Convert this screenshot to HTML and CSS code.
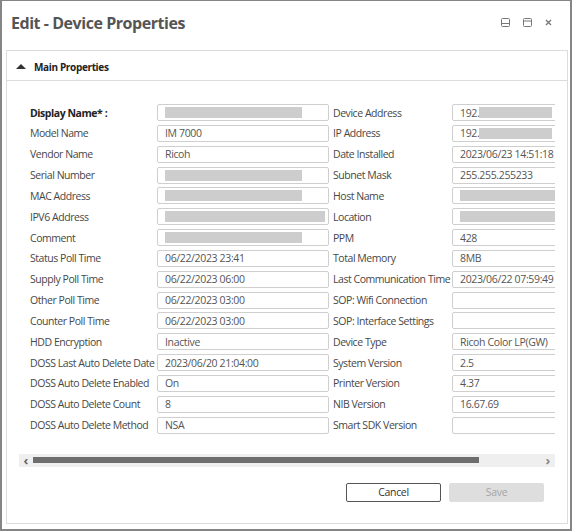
FILE: index.html
```html
<!DOCTYPE html>
<html lang="en">
<head>
    <meta charset="UTF-8">
    <title>Edit - Device Properties</title>
    <link rel="stylesheet" href="styles.css">
</head>
<body>
<div class="window">
    <!-- title bar -->
    <div class="titleBar">
        <div class="titleText">Edit - Device Properties</div>
        <div class="winIcons">
            <svg width="9" height="9" viewBox="0 0 9 9"><rect x="0.5" y="0.5" width="8" height="8" rx="1" fill="none" stroke="#777"/><line x1="1" y1="5.5" x2="8" y2="5.5" stroke="#777"/></svg>
            <svg width="9" height="9" viewBox="0 0 9 9"><rect x="0.5" y="0.5" width="8" height="8" rx="1" fill="none" stroke="#777"/><line x1="1" y1="3" x2="8" y2="3" stroke="#777"/></svg>
            <svg width="7" height="7" viewBox="0 0 7 7"><path d="M1 1 L6 6 M6 1 L1 6" stroke="#777" stroke-width="1.4"/></svg>
        </div>
    </div>

    <div class="panel">
        <div class="panelHead">
            <span class="arrowUp"></span>
            <span class="panelTitle">Main Properties</span>
        </div>

        <div class="scrollView">
            <div class="propGrid" id="propGrid"></div>
        </div>
        <div class="hScroll">
            <span class="sArrow left">&#8249;</span>
            <div class="sThumb"></div>
            <span class="sArrow right">&#8250;</span>
        </div>

        <div class="btnRow">
            <button class="btn cancel">Cancel</button>
            <button class="btn save" disabled>Save</button>
        </div>
    </div>
</div>

<script>
    // [label, value, redacted width, required]
    const rows = [
        [["Display Name* :", "", 137, true], ["Device Address", "192.", 73]],
        [["Model Name", "IM 7000"], ["IP Address", "192.", 73]],
        [["Vendor Name", "Ricoh"], ["Date Installed", "2023/06/23 14:51:18"]],
        [["Serial Number", "", 137], ["Subnet Mask", "255.255.255233"]],
        [["MAC Address", "", 137], ["Host Name", "", 96]],
        [["IPV6 Address", "", 160], ["Location", "", 96]],
        [["Comment", "", 137], ["PPM", "428"]],
        [["Status Poll Time", "06/22/2023 23:41"], ["Total Memory", "8MB"]],
        [["Supply Poll Time", "06/22/2023 06:00"], ["Last Communication Time", "2023/06/22 07:59:49"]],
        [["Other Poll Time", "06/22/2023 03:00"], ["SOP: Wifi Connection", ""]],
        [["Counter Poll Time", "06/22/2023 03:00"], ["SOP: Interface Settings", ""]],
        [["HDD Encryption", "Inactive"], ["Device Type", "Ricoh Color LP(GW)"]],
        [["DOSS Last Auto Delete Date", "2023/06/20 21:04:00"], ["System Version", "2.5"]],
        [["DOSS Auto Delete Enabled", "On"], ["Printer Version", "4.37"]],
        [["DOSS Auto Delete Count", "8"], ["NIB Version", "16.67.69"]],
        [["DOSS Auto Delete Method", "NSA"], ["Smart SDK Version", ""]]
    ];

    const grid = document.getElementById('propGrid');

    function addCell(item, side) {
        const label = document.createElement('div');
        label.className = 'propLabel ' + side + (item[3] ? ' req' : '');
        label.textContent = item[0];
        grid.appendChild(label);

        const box = document.createElement('div');
        box.className = 'propBox ' + side;
        const val = document.createElement('span');
        val.textContent = item[1];
        box.appendChild(val);
        if (item[2]) {
            const mask = document.createElement('span');
            mask.className = 'mask';
            mask.style.width = item[2] + 'px';
            box.appendChild(mask);
        }
        grid.appendChild(box);
    }

    rows.forEach(r => {
        addCell(r[0], 'colA');
        addCell(r[1], 'colB');
    });
</script>
</body>
</html>
```

FILE: styles.css
```css
body {
    margin: 0;
    font-family: "Open Sans", "Noto Sans", sans-serif;
    background: #fff;
}
.window {
    width: 572px;
    height: 531px;
    box-sizing: border-box;
    border: 2px solid #858585;
    border-top-width: 1px;
    display: flex;
    flex-direction: column;
}
.titleBar {
    height: 49px;
    display: flex;
    align-items: center;
    justify-content: space-between;
    padding: 0 18px 6px 9px;
    box-sizing: border-box;
}
.titleText {
    font-size: 16px;
    font-weight: bold;
    color: #555;
    letter-spacing: -0.45px;
}
.winIcons {
    display: flex;
    align-items: center;
    gap: 13px;
}
.panel {
    margin: 0 2px 0 4px;
    border: 1px solid #dcdcdc;
    height: 474px;
    box-sizing: border-box;
}
.panelHead {
    height: 30px;
    border-bottom: 1px solid #dcdcdc;
    display: flex;
    align-items: center;
    padding-left: 9px;
    padding-top: 2px;
    box-sizing: border-box;
}
.arrowUp {
    width: 0;
    height: 0;
    border-left: 5px solid transparent;
    border-right: 5px solid transparent;
    border-bottom: 5px solid #333;
    margin-right: 8px;
}
.panelTitle {
    font-size: 10px;
    font-weight: bold;
    color: #222;
    letter-spacing: -0.35px;
}
.scrollView {
    margin: 23px 12px 0 12px;
    overflow: hidden;
}
.propGrid {
    display: grid;
    grid-template-columns: 138px 172px 123px 160px;
    grid-auto-rows: 17px;
    row-gap: 3.85px;
    width: 600px;
}
.propLabel {
    font-size: 10.5px;
    color: #474747;
    letter-spacing: -0.45px;
    display: flex;
    align-items: center;
    white-space: nowrap;
}
.propLabel.colA {
    padding-left: 11px;
}
.propLabel.colB {
    padding-left: 4px;
}
.propLabel.req {
    font-weight: bold;
    color: #222;
    letter-spacing: -0.45px;
}
.propBox {
    border: 1px solid #cfcfcf;
    border-radius: 2px;
    display: flex;
    align-items: center;
    padding-left: 7px;
    font-size: 10.5px;
    letter-spacing: -0.35px;
    color: #555;
    white-space: nowrap;
    overflow: hidden;
}
.mask {
    height: 11px;
    background: #cdcdcd;
}
.hScroll {
    margin: 20px 12px 0 12px;
    height: 13px;
    background: #efefef;
    display: flex;
    align-items: center;
}
.sArrow {
    width: 14px;
    text-align: center;
    font-size: 13px;
    font-weight: bold;
    line-height: 13px;
    color: #666;
}
.sArrow.right {
    margin-left: auto;
    color: #888;
}
.sThumb {
    width: 446px;
    height: 6px;
    background: #6e6e6e;
}
.btnRow {
    display: flex;
    justify-content: flex-end;
    gap: 8px;
    margin-top: 16px;
    padding-right: 23px;
}
.btn {
    width: 95px;
    height: 19px;
    font-family: "Open Sans", "Noto Sans", sans-serif;
    font-size: 10.5px;
    letter-spacing: -0.3px;
    border-radius: 2px;
    padding: 0;
}
.cancel {
    background: #fff;
    border: 1px solid #555;
    color: #333;
}
.save {
    background: #dedede;
    border: 1px solid #dedede;
    color: #a5a5a5;
}
```
